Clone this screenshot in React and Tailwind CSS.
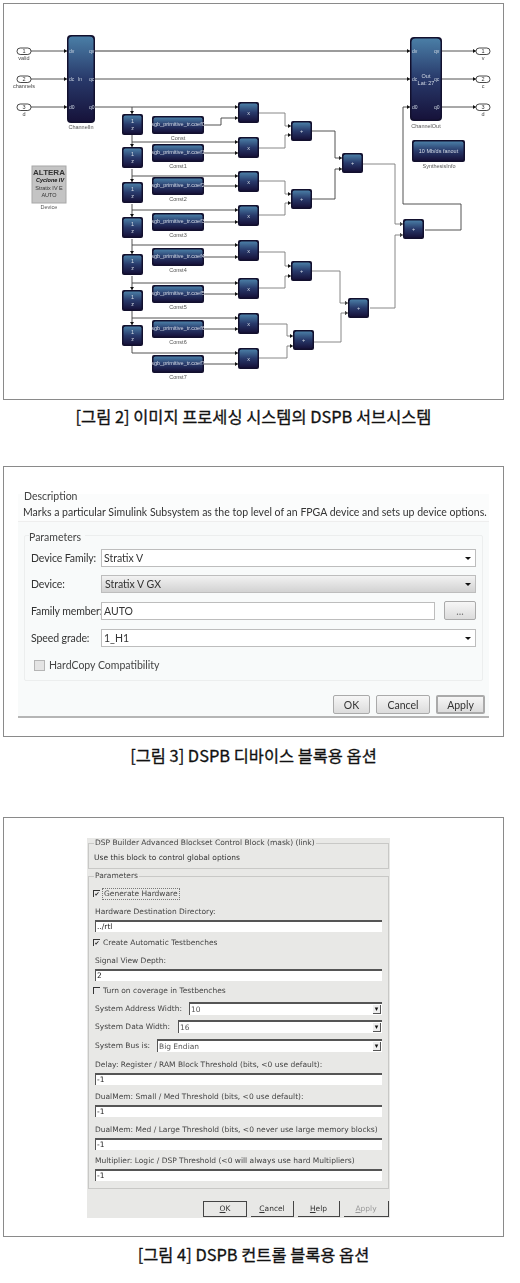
const W = "#3f3f3f";
const SMALL = [114, 147, 182, 217, 254, 290, 325];
const CONST = [[116,"Const"],[144,"Const1"],[177,"Const2"],[213,"Const3"],[248,"Const4"],[285,"Const5"],[320,"Const6"],[355,"Const7"]];
const MULT = [102,137,171,205,240,278,313,348];
const ADD = [[291,121],[291,189],[291,261],[293,330],[342,153],[348,298],[403,219]];

function Block({ x, y, w, h, r = 2, lines = [] }) {
  return (
    <g>
      <rect x={x} y={y} width={w} height={h} rx={r} fill="#12102e" />
      <rect x={x + 1.5} y={y + 1.5} width={w - 3} height={h - 3} rx={r} fill="url(#blk)" />
      {lines.map((t, i) => (
        <text key={i} x={x + w / 2} y={y + h / 2 + 2 + (i - (lines.length - 1) / 2) * 7} textAnchor="middle" fontSize="5.5" fill="#d5dce6" fontFamily="Liberation Sans, sans-serif">{t}</text>
      ))}
    </g>
  );
}
function Wire({ d, thick, grey }) {
  return <path d={d} fill="none" stroke={grey ? "#7a7a7a" : W} strokeWidth={thick ? 1.6 : 0.9} />;
}
function Arrow({ x, y, down }) {
  return down
    ? <path d={`M${x - 2} ${y - 3}L${x + 2} ${y - 3}L${x} ${y}Z`} fill="#111" />
    : <path d={`M${x - 3} ${y - 2}L${x - 3} ${y + 2}L${x} ${y}Z`} fill="#111" />;
}
function Port({ x, y, n, label }) {
  return (
    <g>
      <rect x={x} y={y - 3} width="14" height="6.5" rx="3.2" fill="#fff" stroke="#333" strokeWidth="0.9" />
      <text x={x + 7} y={y + 2} textAnchor="middle" fontSize="5.5" fill="#333" fontFamily="Liberation Sans, sans-serif">{n}</text>
      <text x={x + 7} y={y + 8.5} textAnchor="middle" fontSize="5.5" fill="#444" fontFamily="Liberation Sans, sans-serif">{label}</text>
    </g>
  );
}
function Lbl({ x, y, t }) {
  return <text x={x} y={y} textAnchor="middle" fontSize="5.5" fill="#555" fontFamily="Liberation Sans, sans-serif">{t}</text>;
}

function Diagram() {
  return (
    <svg width="499" height="395" viewBox="4 4 499 395" className="block blur-[0.5px]">
      <defs>
        <linearGradient id="blk" x1="0" y1="0" x2="0" y2="1">
          <stop offset="0" stopColor="#4a7ea6" />
          <stop offset="0.5" stopColor="#28396a" />
          <stop offset="1" stopColor="#16123a" />
        </linearGradient>
      </defs>
      <Wire d="M31 51H67" /><Wire d="M31 79H67" /><Wire d="M31 107H67" />
      <Wire d="M95 51H410" thick grey /><Wire d="M95 79H410" />
      <Wire d="M95 107H238" />
      <Wire d="M442 51H476" /><Wire d="M442 79H476" /><Wire d="M442 107H476" />
      <Wire d="M132 107V114M132 135V147M132 169V182M132 204V217M132 239V254M132 276V290M132 311V325M132 346V353H238" />
      {[0,1,2,3,4,5,6].map((i) => <Arrow key={i} x={132} y={SMALL[i]} down />)}
      {[142,176,210,245,283,318].map((y, i) => <Wire key={i} d={`M132 ${y}H238`} />)}
      <Wire d="M204 125H221V118H238" />
      {[153,186,222,257,294,329,364].map((y, i) => <Wire key={i} d={`M204 ${y}H238`} />)}
      {[107,118,142,153,176,186,210,222,245,257,283,294,318,329,353,364].map((y, i) => <Arrow key={i} x={238} y={y} />)}
      <Wire d="M259 113H285V126H291" grey /><Wire d="M259 148H285V135H291" grey />
      <Wire d="M259 181H285V194H291" grey /><Wire d="M259 215H285V203H291" grey />
      <Wire d="M259 252H285V266H291" grey /><Wire d="M259 288H285V276H291" grey />
      <Wire d="M259 324H287V336H293" grey /><Wire d="M259 358H287V346H293" grey />
      {[[291,126],[291,135],[291,194],[291,203],[291,266],[291,276],[293,336],[293,346],[342,158],[342,169],[348,303],[348,313],[403,224],[403,235]].map(([x,y],i) => <Arrow key={i} x={x} y={y} />)}
      <Wire d="M312 131H335V158H342" /><Wire d="M312 199H335V169H342" />
      <Wire d="M312 271H340V303H348" grey /><Wire d="M314 342H341V313H348" grey />
      <Wire d="M363 164H395V224H403" grey /><Wire d="M370 308H395V235H403" grey />
      <Wire d="M425 230H461V204H403V107H410" />
      {[[67,51],[67,79],[67,107],[410,51],[410,79],[410,107],[476,51],[476,79],[476,107]].map(([x,y],i) => <Arrow key={i} x={x} y={y} />)}

      <Port x={17} y={51} n="1" label="valid" />
      <Port x={17} y={79} n="2" label="channels" />
      <Port x={17} y={107} n="3" label="d" />
      <Port x={476} y={51} n="1" label="v" />
      <Port x={476} y={79} n="2" label="c" />
      <Port x={476} y={107} n="3" label="d" />

      <Block x={67} y={35} w={28} h={88} r={4} />
      {[51,79,107].map((y) => <g key={y}>
        <text x={69} y={y + 2} fontSize="5" fill="#cbd5e1" fontFamily="Liberation Sans, sans-serif">d{y === 51 ? "v" : y === 79 ? "c" : "0"}</text>
        <text x={89} y={y + 2} fontSize="5" fill="#cbd5e1" fontFamily="Liberation Sans, sans-serif">{y === 51 ? "qv" : y === 79 ? "qc" : "q0"}</text>
      </g>)}
      <text x={80} y={81} textAnchor="middle" fontSize="5" fill="#cbd5e1" fontFamily="Liberation Sans, sans-serif">In</text>
      <Lbl x={81} y={129} t="ChannelIn" />
      <Block x={410} y={37} w={32} h={84} r={4} lines={["Out", "Lat: 27"]} />
      {[51,79,107].map((y) => <g key={y}>
        <text x={412} y={y + 2} fontSize="5" fill="#cbd5e1" fontFamily="Liberation Sans, sans-serif">d{y === 51 ? "v" : y === 79 ? "c" : "0"}</text>
        <text x={434} y={y + 2} fontSize="5" fill="#cbd5e1" fontFamily="Liberation Sans, sans-serif">{y === 51 ? "qv" : y === 79 ? "qc" : "q0"}</text>
      </g>)}
      <Lbl x={426} y={128} t="ChannelOut" />
      <Block x={412} y={140} w={53} h={22} lines={["10 Mb/ds fanout"]} />
      <Lbl x={439} y={168} t="SynthesisInfo" />

      {SMALL.map((y) => <Block key={y} x={122} y={y} w={21} h={21} lines={["1", "z"]} />)}
      {CONST.map(([y, t], i) => (
        <g key={y}>
          <Block x={152} y={y} w={52} h={18} />
          <text x={178} y={y + 10} textAnchor="middle" fontSize="5.5" fill="#d8dee8" fontFamily="Liberation Sans, sans-serif">sgb_primitive_tr.coef{i}</text>
          <Lbl x={178} y={y + 24} t={t} />
        </g>
      ))}
      {MULT.map((y) => <Block key={y} x={238} y={y} w={21} h={21} lines={["x"]} />)}
      {ADD.map(([x, y]) => <Block key={x + "-" + y} x={x} y={y} w={21} h={20} lines={["+"]} />)}

      <rect x={32} y={166} width={34} height={37} fill="#c4c4c4" stroke="#a8a8a8" />
      <text x={49} y={175} textAnchor="middle" fontSize="8" fontWeight="700" fill="#333" fontFamily="Liberation Sans, sans-serif">ALTERA</text>
      <text x={50} y={182} textAnchor="middle" fontSize="5.5" fontWeight="700" fontStyle="italic" fill="#111" fontFamily="Liberation Sans, sans-serif">Cyclone IV</text>
      <text x={49} y={190} textAnchor="middle" fontSize="5.5" fill="#333" fontFamily="Liberation Sans, sans-serif">Stratix IV E</text>
      <text x={49} y={197} textAnchor="middle" fontSize="5.5" fill="#333" fontFamily="Liberation Sans, sans-serif">AUTO</text>
      <Lbl x={49} y={209} t="Device" />
    </svg>
  );
}

function Caption({ children, className }) {
  return (
    <div className={"text-center text-[16.4px] leading-[20px] font-normal text-[#111] [-webkit-text-stroke:0.3px_#111] [font-family:'Noto_Sans_CJK_KR',sans-serif] " + className}>
      {children}
    </div>
  );
}

function Combo({ value, grey, className = "" }) {
  return (
    <div className={"flex h-[18px] items-center justify-between border border-[#bdbdbd] pl-[2px] pr-[4px] text-[#333] " + (grey ? "bg-gradient-to-b from-[#f2f2f2] to-[#d2d2d2] " : "bg-white ") + className}>
      <span className={grey ? "ml-[1px]" : ""}>{value}</span>
      <span className="h-0 w-0 border-x-[3px] border-t-[3px] border-x-transparent border-t-[#111]" />
    </div>
  );
}
function Row2({ label, children, className = "" }) {
  return (
    <div className={"flex items-center pl-[6px] " + className}>
      <span className="w-[70px] shrink-0 whitespace-nowrap tracking-[-0.1px] text-[#333]">{label}</span>
      {children}
    </div>
  );
}
function Btn2({ children, className = "" }) {
  return (
    <div className={"flex h-[19px] items-center justify-center rounded-[2px] border border-[#aaa] bg-gradient-to-b from-[#f6f6f6] to-[#dcdcdc] text-[#333] " + className}>
      {children}
    </div>
  );
}

function DeviceDialog() {
  return (
    <div className="ml-[3px] flex h-[271px] w-[501px] flex-col border border-[#8a8a8a] bg-white pl-[14px] pt-[27px] text-[10.5px] leading-[14px] [font-family:'Lato',sans-serif] blur-[0.3px]">
      <div className="flex h-[224px] w-[471px] flex-col border-b-2 border-[#b5b5b5] bg-[#f8fafa]">
        <div className="h-[28px] border-b border-[#eeeeee] bg-[#fbfcfc] pl-[5px]">
          <div className="-mt-[5px] pl-[1px] text-[#444]">Description</div>
          <div className="mt-[2px] whitespace-nowrap text-[#333]">Marks a particular Simulink Subsystem as the top level of an FPGA device and sets up device options.</div>
        </div>
        <div className="relative ml-[6px] mt-[13px] h-[146px] w-[459px] rounded-[2px] border border-[#eceeee]">
          <span className="absolute -top-[6px] left-[4px] bg-[#f8fafa] pr-1 text-[#444]">Parameters</span>
          <div className="flex flex-col pt-[13px]">
            <Row2 label="Device Family:"><Combo value="Stratix V" className="w-[375px]" /></Row2>
            <Row2 label="Device:" className="mt-[8px]"><Combo value="Stratix V GX" grey className="w-[375px]" /></Row2>
            <Row2 label="Family member:" className="mt-[8px]">
              <div className="flex h-[18px] w-[334px] items-center border border-[#bdbdbd] bg-white pl-[2px] text-[#333]">AUTO</div>
              <Btn2 className="ml-[9px] w-[32px] text-[#777]">...</Btn2>
            </Row2>
            <Row2 label="Speed grade:" className="mt-[9px]"><Combo value="1_H1" className="w-[375px]" /></Row2>
            <div className="ml-[9px] mt-[11px] flex items-center gap-[4px] text-[#444]">
              <span className="h-[11px] w-[11px] border border-[#b5b5b5] bg-[#e4e4e4]" />
              HardCopy Compatibility
            </div>
          </div>
        </div>
        <div className="ml-[315px] mt-[14px] flex gap-[6px]">
          <Btn2 className="w-[37px]">OK</Btn2>
          <Btn2 className="w-[54px]">Cancel</Btn2>
          <Btn2 className="w-[49px] border-2 border-[#7fb2cf] from-[#f4f9fc] to-[#cfe6f2]">Apply</Btn2>
        </div>
      </div>
    </div>
  );
}

function Field({ label, value, top = 0 }) {
  return (
    <div style={{ marginTop: top }} className="flex flex-col px-[6px]">
      <div className="h-[13px] whitespace-nowrap leading-[13px] text-[#444]">{label}</div>
      <div className="mt-[2px] h-[12px] border-t-2 border-l border-[#555] bg-white pl-[1px] leading-[10px] text-[#222]">{value}</div>
    </div>
  );
}
function Check({ label, checked, focus, top }) {
  return (
    <div style={{ marginTop: top }} className="flex h-[13px] items-center pl-[4px] text-[#444]">
      <span className="flex h-[7px] w-[7px] items-center justify-center border-l border-t border-[#333] bg-[#e8e8e8] text-[6px] leading-[6px] text-[#222]">{checked ? "✔" : ""}</span>
      <span className={"ml-[2px] pl-[1px] pr-[1px] " + (focus ? "border border-dotted border-[#777]" : "")}>{label}</span>
    </div>
  );
}
function Sel({ label, value, w, top }) {
  return (
    <div style={{ marginTop: top }} className="flex h-[13px] items-center justify-between px-[6px]">
      <span className="whitespace-nowrap text-[#444]">{label}</span>
      <div style={{ width: w }} className="flex h-[13px] items-center justify-between border-t-2 border-l border-[#555] bg-white pl-[1px] text-[#555]">
        <span>{value}</span>
        <span className="mr-[1px] flex h-[9px] w-[8px] items-center justify-center border-r border-b border-[#555] bg-[#eee] text-[7px] leading-[7px] text-[#111]">▾</span>
      </div>
    </div>
  );
}
function Btn3({ first, rest, w, className = "" }) {
  return (
    <div style={{ width: w }} className={"flex h-[16px] items-center justify-center border-r border-b border-[#444] " + className}>
      <span><span className="underline">{first}</span>{rest}</span>
    </div>
  );
}

function ControlDialog() {
  return (
    <div className="ml-[3px] flex h-[420px] w-[501px] border border-[#8a8a8a] bg-white pl-[83px] pt-[20px] text-[7.5px] leading-[10px] [font-family:'DejaVu_Sans',sans-serif] blur-[0.3px]">
      <div className="flex h-[380px] w-[303px] flex-col bg-[#e8e8e6]">
        <div className="relative mx-[1px] mt-[5px] h-[26px] border border-[#c8c8c6] pl-[5px]">
          <span className="absolute -top-[6px] left-[5px] whitespace-nowrap bg-[#e8e8e6] px-[1px] text-[#444]">DSP Builder Advanced Blockset Control Block (mask) (link)</span>
          <div className="mt-[9px] whitespace-nowrap text-[#333]">Use this block to control global options</div>
        </div>
        <div className="relative mx-[1px] mt-[7px] h-[313px] border border-[#c8c8c6]">
          <span className="absolute -top-[6px] left-[5px] bg-[#e8e8e6] px-[1px] text-[#444]">Parameters</span>
          <Check label="Generate Hardware" checked focus top={10} />
          <Field label="Hardware Destination Directory:" value="../rtl" top={5} />
          <Check label="Create Automatic Testbenches" checked top={4} />
          <Field label="Signal View Depth:" value="2" top={5} />
          <Check label="Turn on coverage in Testbenches" top={3} />
          <Sel label="System Address Width:" value="10" w={193} top={5} />
          <Sel label="System Data Width:" value="16" w={204} top={5} />
          <Sel label="System Bus is:" value="Big Endian" w={225} top={6} />
          <Field label="Delay: Register / RAM Block Threshold (bits, <0 use default):" value="-1" top={6} />
          <Field label="DualMem: Small / Med Threshold (bits, <0 use default):" value="-1" top={5} />
          <Field label="DualMem: Med / Large Threshold (bits, <0 never use large memory blocks)" value="-1" top={6} />
          <Field label="Multiplier: Logic / DSP Threshold (<0 will always use hard Multipliers)" value="-1" top={4} />
        </div>
        <div className="mt-[12px] flex justify-end gap-[4px] pr-[1px] text-[#333]">
          <Btn3 first="O" rest="K" w={44} className="border-l border-t border-[#333]" />
          <Btn3 first="C" rest="ancel" w={43} />
          <Btn3 first="H" rest="elp" w={42} />
          <Btn3 first="A" rest="pply" w={45} className="text-[#999]" />
        </div>
      </div>
    </div>
  );
}

export default function App() {
  return (
    <div className="flex h-[1283px] w-[520px] flex-col bg-white pt-[3px]">
      <div className="ml-[3px] h-[397px] w-[501px] border border-[#8a8a8a] bg-white">
        <Diagram />
      </div>
      <Caption className="mt-[6px] w-[507px]">[그림 2] 이미지 프로세싱 시스템의 DSPB 서브시스템</Caption>
      <div className="h-[40px]" />
      <DeviceDialog />
      <Caption className="mt-[8px] w-[507px]">[그림 3] DSPB 디바이스 블록용 옵션</Caption>
      <div className="h-[52px]" />
      <ControlDialog />
      <Caption className="mt-[7px] w-[507px]">[그림 4] DSPB 컨트롤 블록용 옵션</Caption>
    </div>
  );
}
